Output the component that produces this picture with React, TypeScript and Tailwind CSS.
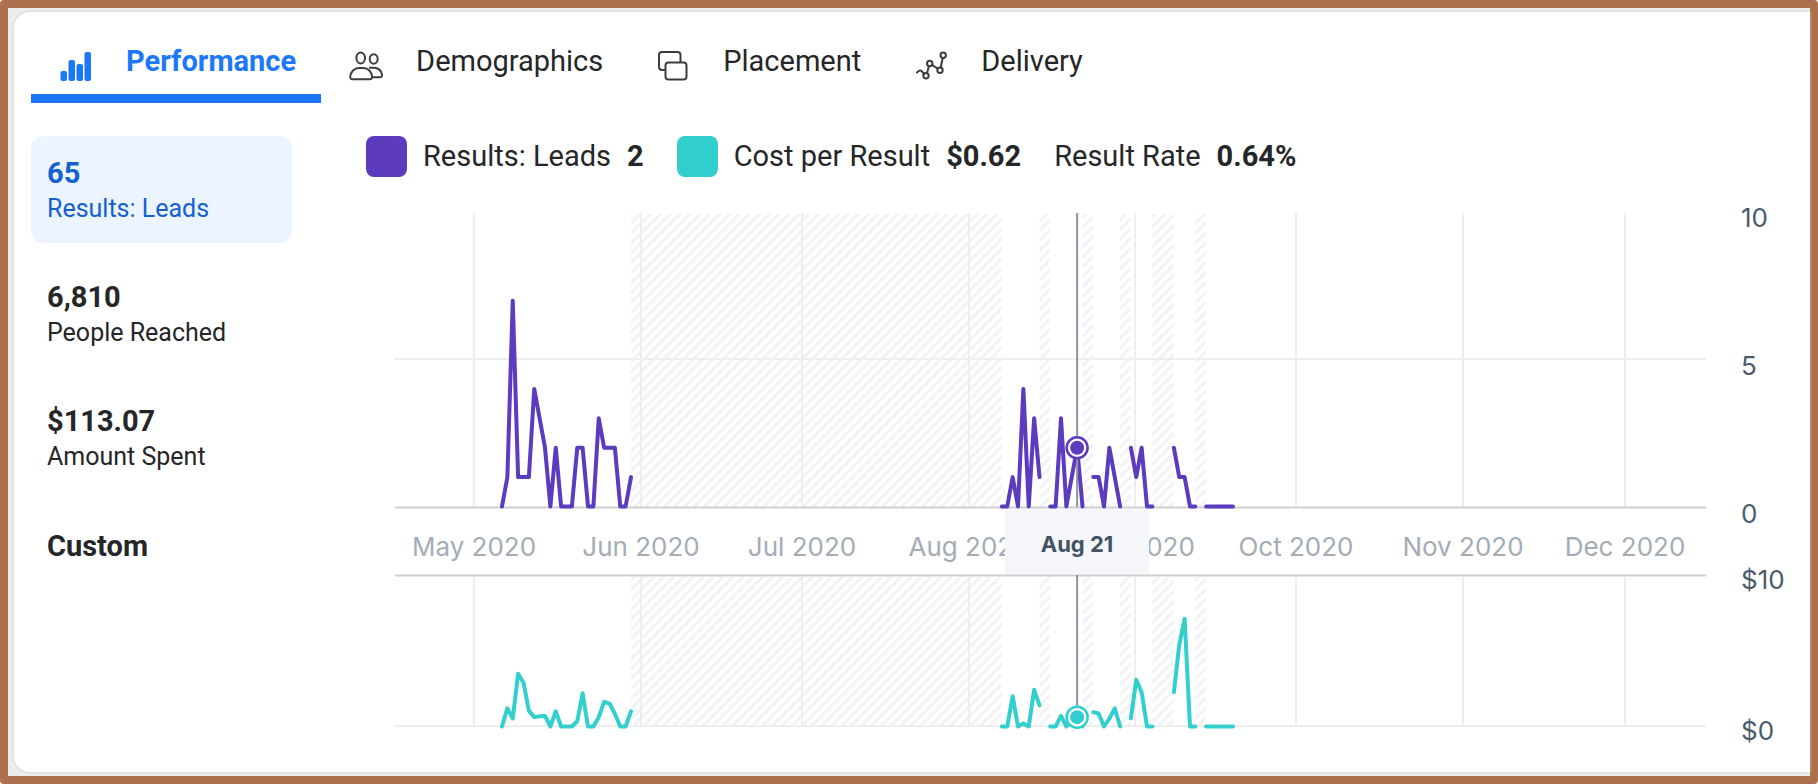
type Point = [day: number, value: number];

type Tab = {
  label: string;
  icon: React.ReactNode;
};

// Days are counted from May 6, the first day with results.
const DAY_ZERO_X = 108;
const DAY_WIDTH = 5.375;

const resultSegments: Point[][] = [
  [
    [0, 0], [1, 1], [2, 7], [3, 1], [4, 1], [5, 1], [6, 4], [7, 3], [8, 2], [9, 0], [10, 2], [11, 0], [12, 0],
    [13, 0], [14, 2], [15, 2], [16, 0], [17, 0], [18, 3], [19, 2], [20, 2], [21, 2], [22, 0], [23, 0], [24, 1],
  ],
  [[93, 0], [94, 0], [95, 1], [96, 0], [97, 4], [98, 0], [99, 3], [100, 1]],
  [[102, 0], [103, 0], [104, 3], [105, 0], [106, 1], [107, 2], [108, 0]],
  [[110, 1], [111, 1], [112, 0], [113, 2], [114, 1], [115, 0]],
  [[117, 2], [118, 1], [119, 2], [120, 0], [121, 0]],
  [[125, 2], [126, 1], [127, 1], [128, 0], [129, 0]],
  [[131, 0], [136, 0]],
];

const costSegments: Point[][] = [
  [
    [0, 0], [1, 1.2], [2, 0.53], [3, 3.5], [4, 2.9], [5, 1.05], [6, 0.62], [7, 0.68], [8, 0.7], [9, 0], [10, 1],
    [11, 0], [12, 0], [13, 0], [14, 0.35], [15, 2.2], [16, 0], [17, 0], [18, 0.62], [19, 1.63], [20, 1.52],
    [21, 0.84], [22, 0], [23, 0], [24, 1],
  ],
  [[93, 0], [94, 0], [95, 2], [96, 0], [97, 0.2], [98, 0], [99, 2.43], [100, 1.4]],
  [[102, 0], [103, 0], [104, 0.7], [105, 0], [106, 0.4], [107, 0.62], [108, 0]],
  [[110, 0.95], [111, 0.86], [112, 0], [113, 0.53], [114, 1.2], [115, 0]],
  [[117, 0.55], [118, 3.1], [119, 2.27], [120, 0], [121, 0]],
  [[125, 2.27], [126, 5.4], [127, 7.13], [128, 0], [129, 0]],
  [[131, 0], [136, 0]],
];

const inactiveRanges = [[24, 93], [100, 102], [108, 110], [115, 117], [121, 125], [129, 131]];

const months = [
  { label: "May 2020", x: 80 },
  { label: "Jun 2020", x: 247 },
  { label: "Jul 2020", x: 408 },
  { label: "Aug 2020", x: 575 },
  { label: "Sep 2020", x: 741 },
  { label: "Oct 2020", x: 902 },
  { label: "Nov 2020", x: 1069 },
  { label: "Dec 2020", x: 1231 },
];

const axisLabels = [
  { label: "10", y: 26 },
  { label: "5", y: 174 },
  { label: "0", y: 322 },
  { label: "$10", y: 388 },
  { label: "$0", y: 539 },
];

const metrics = [
  { value: "65", label: "Results: Leads" },
  { value: "6,810", label: "People Reached" },
  { value: "$113.07", label: "Amount Spent" },
];

const dayX = (day: number) => DAY_ZERO_X + day * DAY_WIDTH;
const resultY = (value: number) => 305.5 - value * 29.4;
const costY = (value: number) => 525.5 - value * 15.1;

function toPoints(segment: Point[], scale: (value: number) => number) {
  return segment.map(([day, value]) => `${dayX(day)},${scale(value)}`).join(" ");
}

const tabs: Tab[] = [
  {
    label: "Performance",
    icon: (
      <svg viewBox="0 0 32 32" className="size-8" fill="currentColor" aria-hidden="true">
        <rect x="0.5" y="21" width="6.5" height="10" rx="2" />
        <rect x="8.500" y="10" width="6.5" height="21" rx="2" />
        <rect x="16.500" y="14" width="6.5" height="17" rx="2" />
        <rect x="24.5" y="2" width="6.5" height="29" rx="2" />
      </svg>
    ),
  },
  {
    label: "Demographics",
    icon: (
      <svg viewBox="0 0 34 32" className="h-8 w-[34px]" fill="none" stroke="#3c3d3e" strokeWidth="2" aria-hidden="true">
        <ellipse cx="11.7" cy="8" rx="4.3" ry="5.5" />
        <ellipse cx="24.7" cy="9" rx="4" ry="4.7" />
        <path d="M3.5 29.3h17.3c1.500 0 2.500-1 2.300-2.600-.500-5-4-8.700-8.700-8.700H10c-4.700 0-8.300 3.700-8.800 8.700-.2 1.600.8 2.600 2.300 2.600z" />
        <path d="M20 17.700h5c4 0 7.500 2.800 8 7 .2 1.500-.8 2.600-2.300 2.600h-8" />
      </svg>
    ),
  },
  {
    label: "Placement",
    icon: (
      <svg viewBox="0 0 30 32" className="h-8 w-[30px]" fill="none" stroke="#3c3d3e" strokeWidth="2" aria-hidden="true">
        <path d="M7 20H4a3 3 0 0 1-3-3V5a3 3 0 0 1 3-3h15.500a3 3 0 0 1 3 3v7" />
        <rect x="7.500" y="12.500" width="21" height="17" rx="3" />
      </svg>
    ),
  },
  {
    label: "Delivery",
    icon: (
      <svg viewBox="0 0 32 32" className="size-8" fill="none" stroke="#3c3d3e" strokeWidth="2" strokeLinecap="round" aria-hidden="true">
        <path d="M2 22.500l1.700-1.500c1.200-1 2.500-.6 3.300.5l2.200 2.500M12 23l2-7M17 14.800l5.500 3.700M25.700 17.500l2-9.500" />
        <circle cx="11" cy="25.800" r="2.700" />
        <circle cx="14.700" cy="13.500" r="2.700" />
        <circle cx="25" cy="20.300" r="2.700" />
        <circle cx="28.200" cy="5.300" r="2.700" />
      </svg>
    ),
  },
];

function Marker({ y, color }: { y: number; color: string }) {
  return (
    <g>
      <circle cx={dayX(107)} cy={y} r="10.500" fill="#fff" stroke={color} strokeWidth="2.500" />
      <circle cx={dayX(107)} cy={y} r="7" fill={color} />
    </g>
  );
}

function Chart() {
  return (
    <svg viewBox="0 0 1416 559" className="block h-auto w-full" role="img" aria-label="Results and cost per result by day">
      <defs>
        <pattern id="hatch" width="7" height="7" patternUnits="userSpaceOnUse" patternTransform="rotate(45)">
          <rect width="3" height="7" fill="#f2f3f5" />
        </pattern>
      </defs>

      {inactiveRanges.map(([from, to]) => (
        <g key={from} fill="url(#hatch)">
          <rect x={dayX(from)} y="13" width={dayX(to) - dayX(from)} height="293" />
          <rect x={dayX(from)} y="376" width={dayX(to) - dayX(from)} height="149" />
        </g>
      ))}

      <g stroke="#eeeeef" strokeWidth="2">
        {months.map(({ label, x }) => (
          <path key={label} d={`M${x} 12V306M${x} 376V525`} />
        ))}
        <path d="M0 158H1312M0 525H1312" />
      </g>
      <path d="M1 306.500H1312M1 374.500H1312" stroke="#cfcfcf" strokeWidth="2" />

      <g fill="#a4acb5" fontFamily="Inter, sans-serif" fontSize="26" textAnchor="middle">
        {months.map(({ label, x }) => (
          <text key={label} x={x} y="355">
            {label}
          </text>
        ))}
      </g>
      <g fill="#4a5b6c" fontFamily="Inter, sans-serif" fontSize="26">
        {axisLabels.map(({ label, y }) => (
          <text key={label} x="1347" y={y}>
            {label}
          </text>
        ))}
      </g>

      <rect x="611" y="308" width="144" height="65" fill="#f5f6f9" />
      <text x="683" y="351" fill="#435363" fontFamily="Inter, sans-serif" fontSize="22" fontWeight="700" textAnchor="middle">
        Aug 21
      </text>

      <g fill="none" strokeWidth="4" strokeLinecap="round" strokeLinejoin="round">
        {resultSegments.map((segment) => (
          <polyline key={segment[0][0]} points={toPoints(segment, resultY)} stroke="#5c3bbf" />
        ))}
        {costSegments.map((segment) => (
          <polyline key={segment[0][0]} points={toPoints(segment, costY)} stroke="#33cece" />
        ))}
      </g>

      <path d={`M${dayX(107)} 12V306M${dayX(107)} 374V525`} stroke="#8f93a3" strokeWidth="2" />
      <Marker y={resultY(2)} color="#5c3bbf" />
      <Marker y={costY(0.62)} color="#33cece" />
    </svg>
  );
}

export default function App() {
  return (
    <div className="rounded border-8 border-[#ac714c] bg-[#ececec] py-1 pl-1.5 font-[Roboto,sans-serif] text-[#252627]">
      <main className="rounded-l-2xl bg-white pb-3 pl-[17px] shadow-[0_0_3px_#c8c8c8]">
        <nav role="tablist" aria-label="Charts" className="flex">
          {tabs.map(({ label, icon }, i) => (
            <button
              key={label}
              type="button"
              role="tab"
              aria-selected={i === 0}
              className={`flex h-[91px] items-center gap-8 border-b-[9px] pt-[18px] pr-[25px] pl-[27px] text-[29px] ${
                i === 0 ? "border-[#1b74f4] font-bold text-[#1b78f8]" : "border-transparent"
              }`}
            >
              <span className="flex w-9 justify-center pt-2">{icon}</span>
              {label}
            </button>
          ))}
        </nav>

        <div className="mt-[33px] flex">
          <aside className="flex w-[261px] shrink-0 flex-col gap-[17px]">
            {metrics.map(({ value, label }, i) => (
              <button
                key={label}
                type="button"
                className={`h-[107px] rounded-xl px-4 pt-[3px] text-left ${i === 0 ? "bg-[#ecf5ff] text-[#1360ce]" : ""}`}
              >
                <strong className="block text-[29px] leading-9">{value}</strong>
                <span className="block text-[25px] leading-9">{label}</span>
              </button>
            ))}
            <h2 className="px-4 pt-5 text-[29px] leading-9 font-bold">Custom</h2>
          </aside>

          <section className="min-w-0 flex-1">
            <div className="ml-[74px] flex h-[41px] items-center gap-[33px] text-[29px]">
              <div className="flex items-center gap-4">
                <span className="size-[41px] rounded-lg bg-[#5c3bbf]" />
                <span>Results: Leads</span>
                <strong>2</strong>
              </div>
              <div className="flex items-center gap-4">
                <span className="size-[41px] rounded-lg bg-[#33cece]" />
                <span>Cost per Result</span>
                <strong>$0.62</strong>
              </div>
              <div className="flex items-center gap-4">
                <span>Result Rate</span>
                <strong>0.64%</strong>
              </div>
            </div>
            <div className="mt-6 ml-[102px]">
              <Chart />
            </div>
          </section>
        </div>
      </main>
    </div>
  );
}
